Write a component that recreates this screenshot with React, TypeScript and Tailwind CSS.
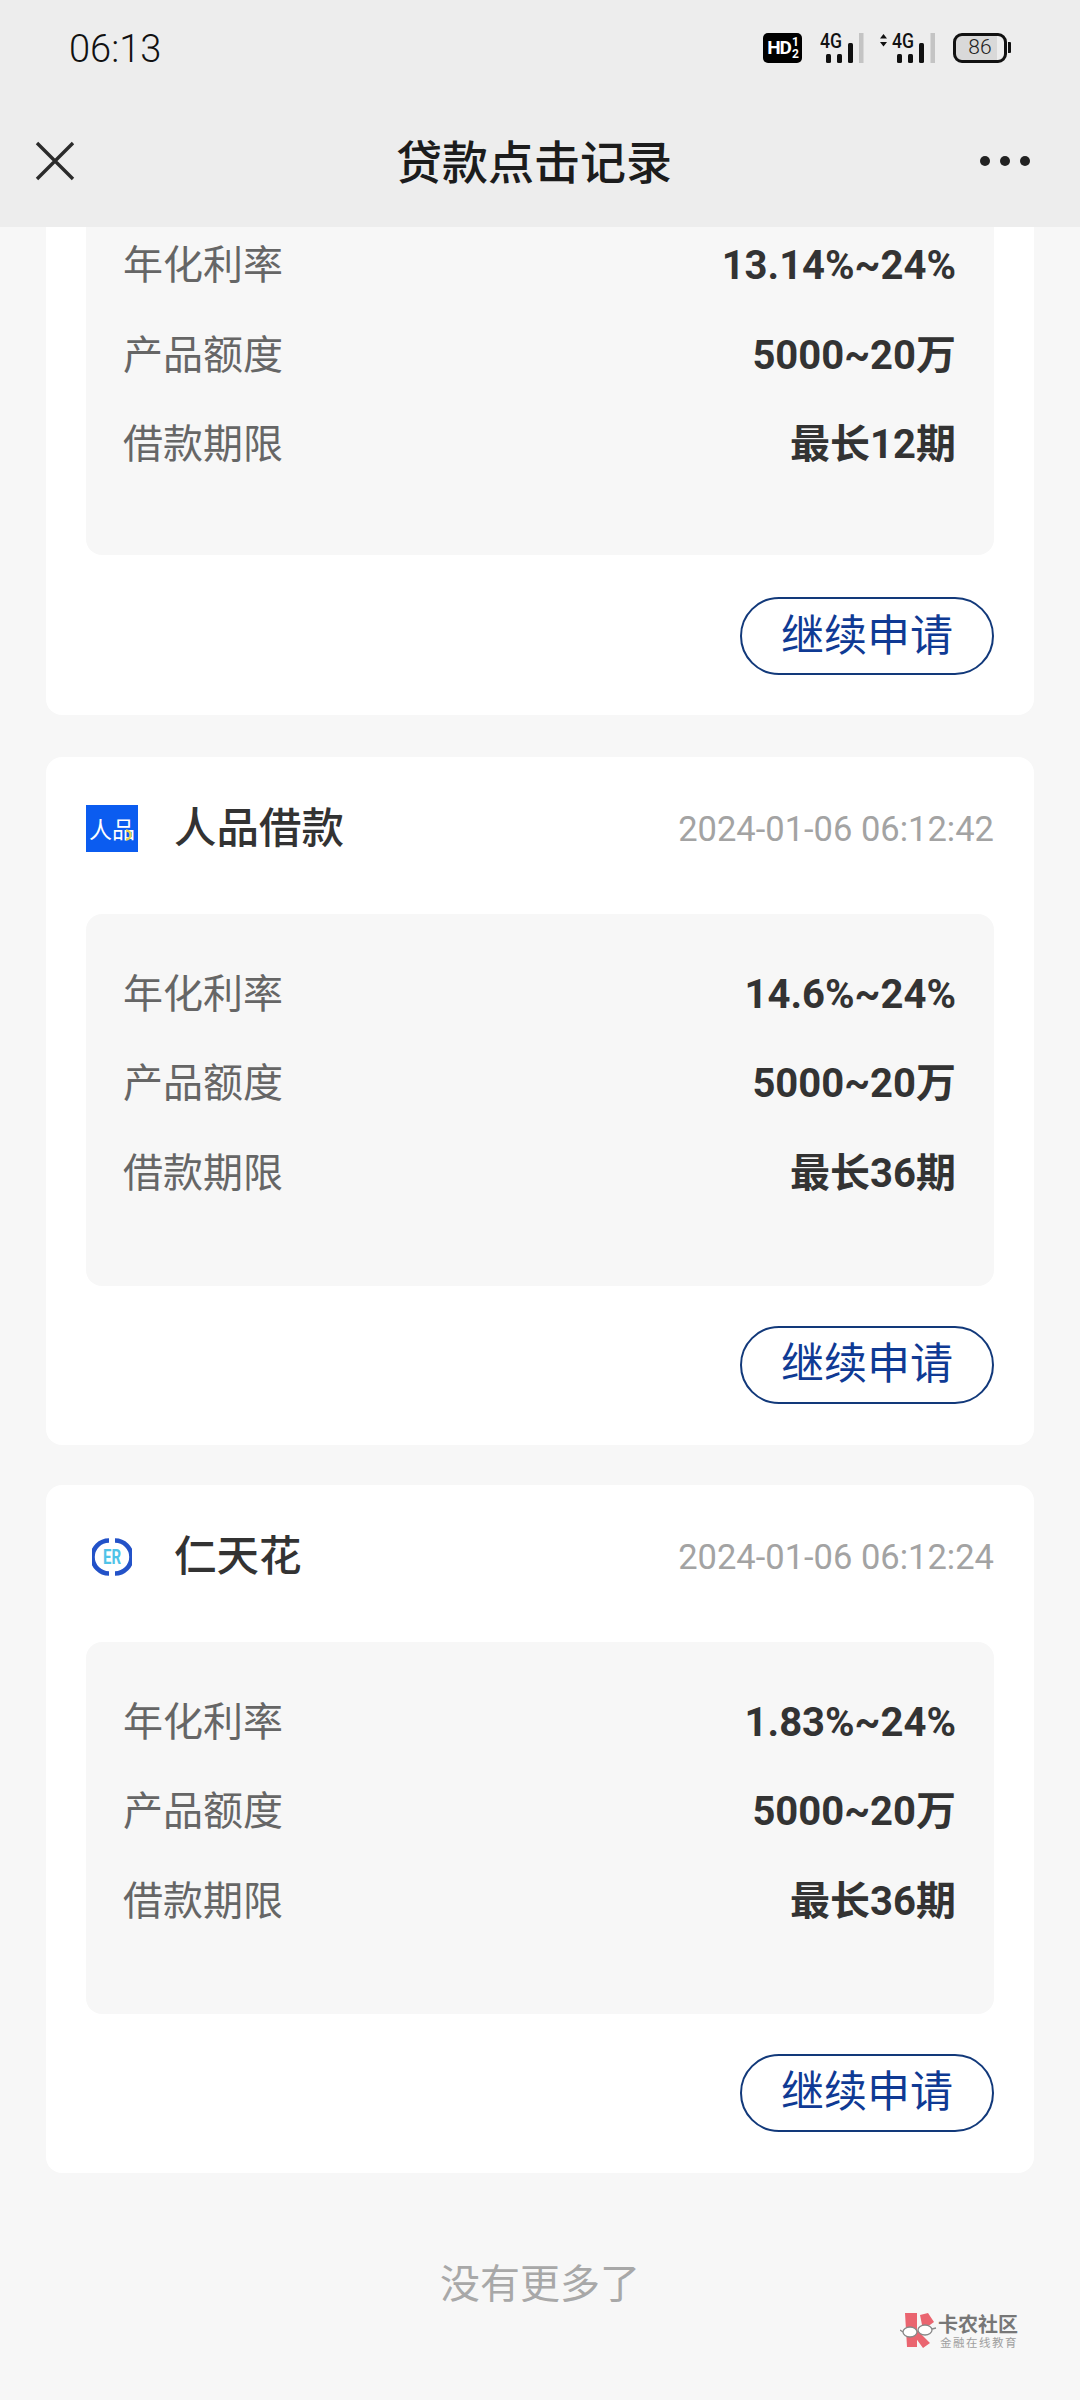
import React from "react";

const FONT = "font-['Roboto','Noto_Sans_CJK_SC',sans-serif]";

function Signal({ arrows }: { arrows?: boolean }) {
  return (
    <svg width={arrows ? 56 : 44} height="36" viewBox={arrows ? "0 -4 56 36" : "0 -4 44 36"} className="-mt-[4px] block">
      {arrows && <path d="M1 6.5 L4.5 2 L8 6.5 Z M1 10 L4.5 14.5 L8 10 Z" fill="#111" />}
      <text x={arrows ? 13 : 0} y="15.5" fontFamily="Roboto, sans-serif" fontSize="20" fontWeight="500" fill="#111" textLength="22" lengthAdjust="spacingAndGlyphs">4G</text>
      <g fill="#111" transform={arrows ? "translate(12 0)" : "translate(0 0)"}>
        <rect x="6" y="22" width="5" height="9" rx="1.5" />
        <rect x="17" y="22" width="5" height="9" rx="1.5" />
        <rect x="28" y="11" width="5" height="20" rx="1.5" />
      </g>
      <rect x={arrows ? 51.5 : 39} y="1" width="4.5" height="30" fill="#c4c4c4" />
    </svg>
  );
}

function Row({ label, value }: { label: string; value: string }) {
  return (
    <div className="flex h-[89.5px] items-center justify-between pt-[3px]">
      <span className="text-[40px] leading-none text-[#666666]">{label}</span>
      <span className="text-[40px] leading-none font-bold text-[#333333]">{value}</span>
    </div>
  );
}

function ContinueButton({ first }: { first?: boolean }) {
  return (
    <div className={first ? "mt-[42px] flex justify-end" : "mt-[40px] flex justify-end"}>
      <div className="flex h-[78px] w-[254px] items-center justify-center rounded-full border-2 border-[#12397a] text-[43px] leading-none text-[#0f3a94]">
        继续申请
      </div>
    </div>
  );
}

function Card({ logo, name, date, rate, term }: { logo: React.ReactNode; name: string; date: string; rate: string; term: string }) {
  return (
    <section className="mt-[40px] rounded-[16px] bg-white px-[40px] pb-[41px] pt-[42px]">
      <div className="mb-[55px] flex h-[60px] items-center">
        <div className="flex w-[52px] items-center justify-center">{logo}</div>
        <h2 className="ml-[36px] pt-[1px] text-[42.5px] font-medium leading-none text-[#333333]">{name}</h2>
        <span className="ml-auto pt-[2px] text-[34.5px] leading-none text-[#a3a3a3]">{date}</span>
      </div>
      <div className="h-[372px] rounded-[16px] bg-[#f7f7f7] pl-[37px] pr-[38px] pt-[35px]">
        <Row label="年化利率" value={rate} />
        <Row label="产品额度" value="5000~20万" />
        <Row label="借款期限" value={term} />
      </div>
      <ContinueButton />
    </section>
  );
}

function RenpinLogo() {
  return (
    <div className="relative flex h-[47px] w-[52px] items-center justify-center bg-[#0b5cf0] pt-[3px] text-[23px] leading-none text-white">
      人品
      <svg width="12" height="12" viewBox="0 0 12 12" className="absolute bottom-[11px] right-[3px]">
        <path d="M3 1.5 A4.5 4.5 0 0 1 3 10.5" fill="none" stroke="#e6d24f" strokeWidth="2.4" />
      </svg>
    </div>
  );
}

function RenLogo() {
  return (
    <svg width="40" height="38" viewBox="0 0 40 38">
      <path d="M17 2.5 A16.5 16.5 0 0 0 17 35.5" fill="none" stroke="#2352c8" strokeWidth="4.6" />
      <path d="M23 2.5 A16.5 16.5 0 0 1 23 35.5" fill="none" stroke="#2352c8" strokeWidth="4.6" />
      <text x="11" y="26" fontFamily="Roboto, sans-serif" fontSize="20" fontWeight="700" fill="#4fc3e8" textLength="18" lengthAdjust="spacingAndGlyphs">ER</text>
    </svg>
  );
}

export default function App() {
  return (
    <div className={`${FONT} relative h-[2400px] w-[1080px] overflow-hidden bg-[#f7f7f7]`}>
      <header className="relative z-10 h-[227px] bg-[#ededed]">
        <div className="flex h-[95px] items-center justify-between pl-[69px] pr-[69px]">
          <span className="pt-[2px] text-[38px] font-light leading-none text-[#111111]">06:13</span>
          <div className="flex items-center">
            <div className="flex h-[30px] w-[39px] items-center justify-center rounded-[5px] bg-black text-[19px] font-bold leading-none tracking-[-1px] text-white">
              HD<span className="ml-[1px] text-[12px] leading-[12px]">1<br />2</span>
            </div>
            <div className="ml-[18px]"><Signal /></div>
            <div className="ml-[15px]"><Signal arrows /></div>
            <div className="ml-[18px] flex items-center">
              <div className="flex h-[30px] w-[54px] items-center justify-center rounded-[9px] border-[3px] border-[#111111] bg-[linear-gradient(90deg,#d9d9d9_86%,#ededed_86%)] text-[21px] font-light leading-none text-[#222222]">
                86
              </div>
              <div className="ml-[1px] h-[11px] w-[3px] rounded-r-[1px] bg-[#111111]" />
            </div>
          </div>
        </div>
        <nav className="flex h-[132px] items-center justify-between pl-[35px] pr-[50px]">
          <svg width="40" height="40" viewBox="0 0 40 40" className="block">
            <path d="M2 2 L38 38 M38 2 L2 38" stroke="#2b2b2b" strokeWidth="3.4" fill="none" />
          </svg>
          <h1 className="ml-[13px] mt-[3px] text-[46px] font-medium leading-none text-[#1c1c1c]">贷款点击记录</h1>
          <div className="flex gap-[10px]">
            <span className="h-[10px] w-[10px] rounded-full bg-[#222222]" />
            <span className="h-[10px] w-[10px] rounded-full bg-[#222222]" />
            <span className="h-[10px] w-[10px] rounded-full bg-[#222222]" />
          </div>
        </nav>
      </header>

      <main className="-mt-[7px] flex flex-col px-[46px]">
        <section className="mb-[1.5px] rounded-b-[16px] bg-white px-[40px] pb-[40px]">
          <div className="h-[335px] rounded-b-[16px] bg-[#f7f7f7] pl-[37px] pr-[38px]">
            <Row label="年化利率" value="13.14%~24%" />
            <Row label="产品额度" value="5000~20万" />
            <Row label="借款期限" value="最长12期" />
          </div>
          <ContinueButton first />
        </section>
        <Card logo={<RenpinLogo />} name="人品借款" date="2024-01-06 06:12:42" rate="14.6%~24%" term="最长36期" />
        <Card logo={<RenLogo />} name="仁天花" date="2024-01-06 06:12:24" rate="1.83%~24%" term="最长36期" />
        <p className="mt-[92px] text-center text-[40px] leading-none text-[#a8a8a8]">没有更多了</p>
      </main>

      <div className="absolute left-[900px] top-[2310px] flex items-start">
        <svg width="37" height="38" viewBox="0 0 37 38">
          <path d="M5 3 H17 V37 H7 Z M20 5 L28 3 L34 12 L23 20 Z M17 20 L30 33 L23 38 L15 27 Z" fill="#ea6570" />
          <path d="M0 20 L3 22 M32 19 L36 18" stroke="#888" strokeWidth="1.3" />
          <ellipse cx="10" cy="22" rx="7" ry="5" fill="#fff" stroke="#888" strokeWidth="1.3" />
          <ellipse cx="25" cy="20" rx="7" ry="5" fill="#fff" stroke="#888" strokeWidth="1.3" />
        </svg>
        <div className="ml-[1px] mt-[4px] flex flex-col">
          <span className="text-[20px] font-bold leading-[22px] text-[#777777]">卡农社区</span>
          <span className="ml-[2px] text-[11.5px] leading-[14px] tracking-[1.5px] text-[#a0a0a0]">金融在线教育</span>
        </div>
      </div>
    </div>
  );
}
